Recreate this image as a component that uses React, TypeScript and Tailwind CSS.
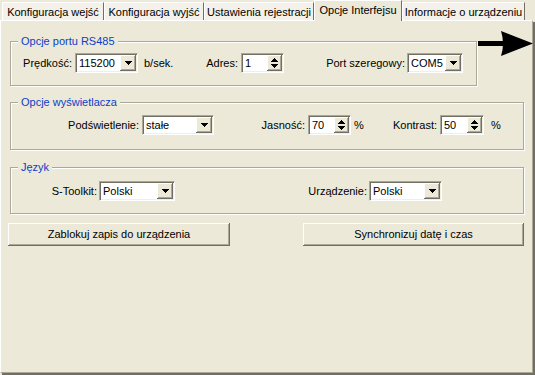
import React from "react";

const raised =
  "bg-[#ECE9D8] shadow-[inset_-1px_-1px_0_#716F64,inset_1px_1px_0_#fff,inset_-2px_-2px_0_#ACA899]";
const sunken =
  "border border-t-[#ACA899] border-l-[#ACA899] border-r-white border-b-white bg-white p-px shadow-[inset_1px_1px_0_#716F64,inset_-1px_-1px_0_#F1EFE2]";

function Combo({ value, className }: { value: string; className: string }) {
  return (
    <div className={`flex h-[20px] shrink-0 ${sunken} ${className}`}>
      <span className="flex-1 pl-[2px] leading-[16px]">{value}</span>
      <div className={`flex w-[16px] items-center justify-center ${raised}`}>
        <svg width="7" height="4" shapeRendering="crispEdges">
          <path d="M0 0h7v1H0zM1 1h5v1H1zM2 2h3v1H2zM3 3h1v1H3z" fill="#000" />
        </svg>
      </div>
    </div>
  );
}

function Spin({ value, className }: { value: string; className: string }) {
  return (
    <div className={`flex h-[20px] shrink-0 ${sunken} ${className}`}>
      <span className="flex-1 pl-[2px] leading-[16px]">{value}</span>
      <div className={`flex w-[15px] flex-col items-center justify-center gap-[2px] ${raised}`}>
        <svg width="7" height="4" shapeRendering="crispEdges">
          <path d="M3 0h1v1H3zM2 1h3v1H2zM1 2h5v1H1zM0 3h7v1H0z" fill="#000" />
        </svg>
        <svg width="7" height="4" shapeRendering="crispEdges">
          <path d="M0 0h7v1H0zM1 1h5v1H1zM2 2h3v1H2zM3 3h1v1H3z" fill="#000" />
        </svg>
      </div>
    </div>
  );
}

function Group({
  title,
  className,
  children,
}: {
  title: string;
  className: string;
  children: React.ReactNode;
}) {
  return (
    <div
      className={`relative ml-[9px] border border-[#ACA899] shadow-[inset_1px_1px_0_#fff,1px_1px_0_#fff] ${className}`}
    >
      <span className="absolute -top-[7px] left-[7px] bg-[#ECE9D8] px-[3px] leading-[13px] text-[#0B3FC8]">
        {title}
      </span>
      {children}
    </div>
  );
}

const tabs = [
  { label: "Konfiguracja wejść", w: "w-[102px]" },
  { label: "Konfiguracja wyjść", w: "w-[100px]" },
  { label: "Ustawienia rejestracji", w: "w-[110px]" },
  { label: "Opcje Interfejsu", w: "w-[88px]", active: true },
  { label: "Informacje o urządzeniu", w: "w-[123px]" },
];

export default function App() {
  return (
    <div className="relative h-[375px] w-[535px] overflow-hidden bg-[#ECE9D8] font-['Liberation_Sans',Arial,sans-serif] text-[11px] text-black">
      {/* tab strip */}
      <div className="flex h-[20px] items-end pl-[2px]">
        {tabs.map((t) =>
          t.active ? (
            <div
              key={t.label}
              className={`relative z-10 -mb-px h-[21px] border-l border-t border-r border-white border-r-[#716F64] bg-[#ECE9D8] pt-[3px] text-center leading-[13px] ${t.w}`}
            >
              {t.label}
            </div>
          ) : (
            <div
              key={t.label}
              className={`h-[18px] border-l border-t border-r border-white border-r-[#716F64] bg-[#F3F1E9] pt-[3px] text-center leading-[13px] ${t.w}`}
            >
              {t.label}
            </div>
          )
        )}
      </div>

      {/* tab page */}
      <div className="h-[353px] w-[533px] border border-white border-b-[#ACA899] border-r-[#ACA899] shadow-[2px_2px_0_#716F64]">
        <Group title="Opcje portu RS485" className="mt-[20px] h-[45px] w-[467px]">
          <div className="flex items-center pt-[11px]">
            <span className="w-[64px] pr-[3px] text-right">Prędkość:</span>
            <Combo value="115200" className="w-[63px]" />
            <span className="w-[40px] pl-[6px]">b/sek.</span>
            <span className="w-[63px] pr-[3px] text-right">Adres:</span>
            <Spin value="1" className="w-[43px]" />
            <span className="w-[123px] pr-[2px] text-right">Port szeregowy:</span>
            <Combo value="COM5" className="w-[56px]" />
          </div>
        </Group>

        <Group title="Opcje wyświetlacza" className="mt-[16px] h-[48px] w-[514px]">
          <div className="flex items-center pt-[12px]">
            <span className="w-[131px] pr-[3px] text-right">Podświetlenie:</span>
            <Combo value="stałe" className="w-[72px]" />
            <span className="w-[94px] pr-[3px] text-right">Jasność:</span>
            <Spin value="70" className="w-[43px]" />
            <span className="w-[10px] pl-[3px]">%</span>
            <span className="w-[79px] pr-[3px] text-right">Kontrast:</span>
            <Spin value="50" className="w-[44px]" />
            <span className="pl-[7px]">%</span>
          </div>
        </Group>

        <Group title="Język" className="mt-[17px] h-[47px] w-[514px]">
          <div className="flex items-center pt-[13px]">
            <span className="w-[88px] pr-[2px] text-right">S-Toolkit:</span>
            <Combo value="Polski" className="w-[76px]" />
            <span className="w-[194px] pr-[2px] text-right">Urządzenie:</span>
            <Combo value="Polski" className="w-[73px]" />
          </div>
        </Group>

        <div className="mt-[9px] flex">
          <button className={`ml-[7px] h-[23px] w-[222px] ${raised}`}>
            Zablokuj zapis do urządzenia
          </button>
          <button className={`ml-[73px] h-[23px] w-[221px] ${raised}`}>
            Synchronizuj datę i czas
          </button>
        </div>
      </div>

      {/* annotation arrow */}
      <svg
        className="absolute left-[478px] top-[29px]"
        width="56"
        height="29"
        viewBox="0 0 56 29"
      >
        <rect x="0" y="12" width="27" height="5" fill="#000" />
        <path d="M23 2L55 14.5L23 27Q27 14.5 23 2Z" fill="#000" />
      </svg>
    </div>
  );
}
